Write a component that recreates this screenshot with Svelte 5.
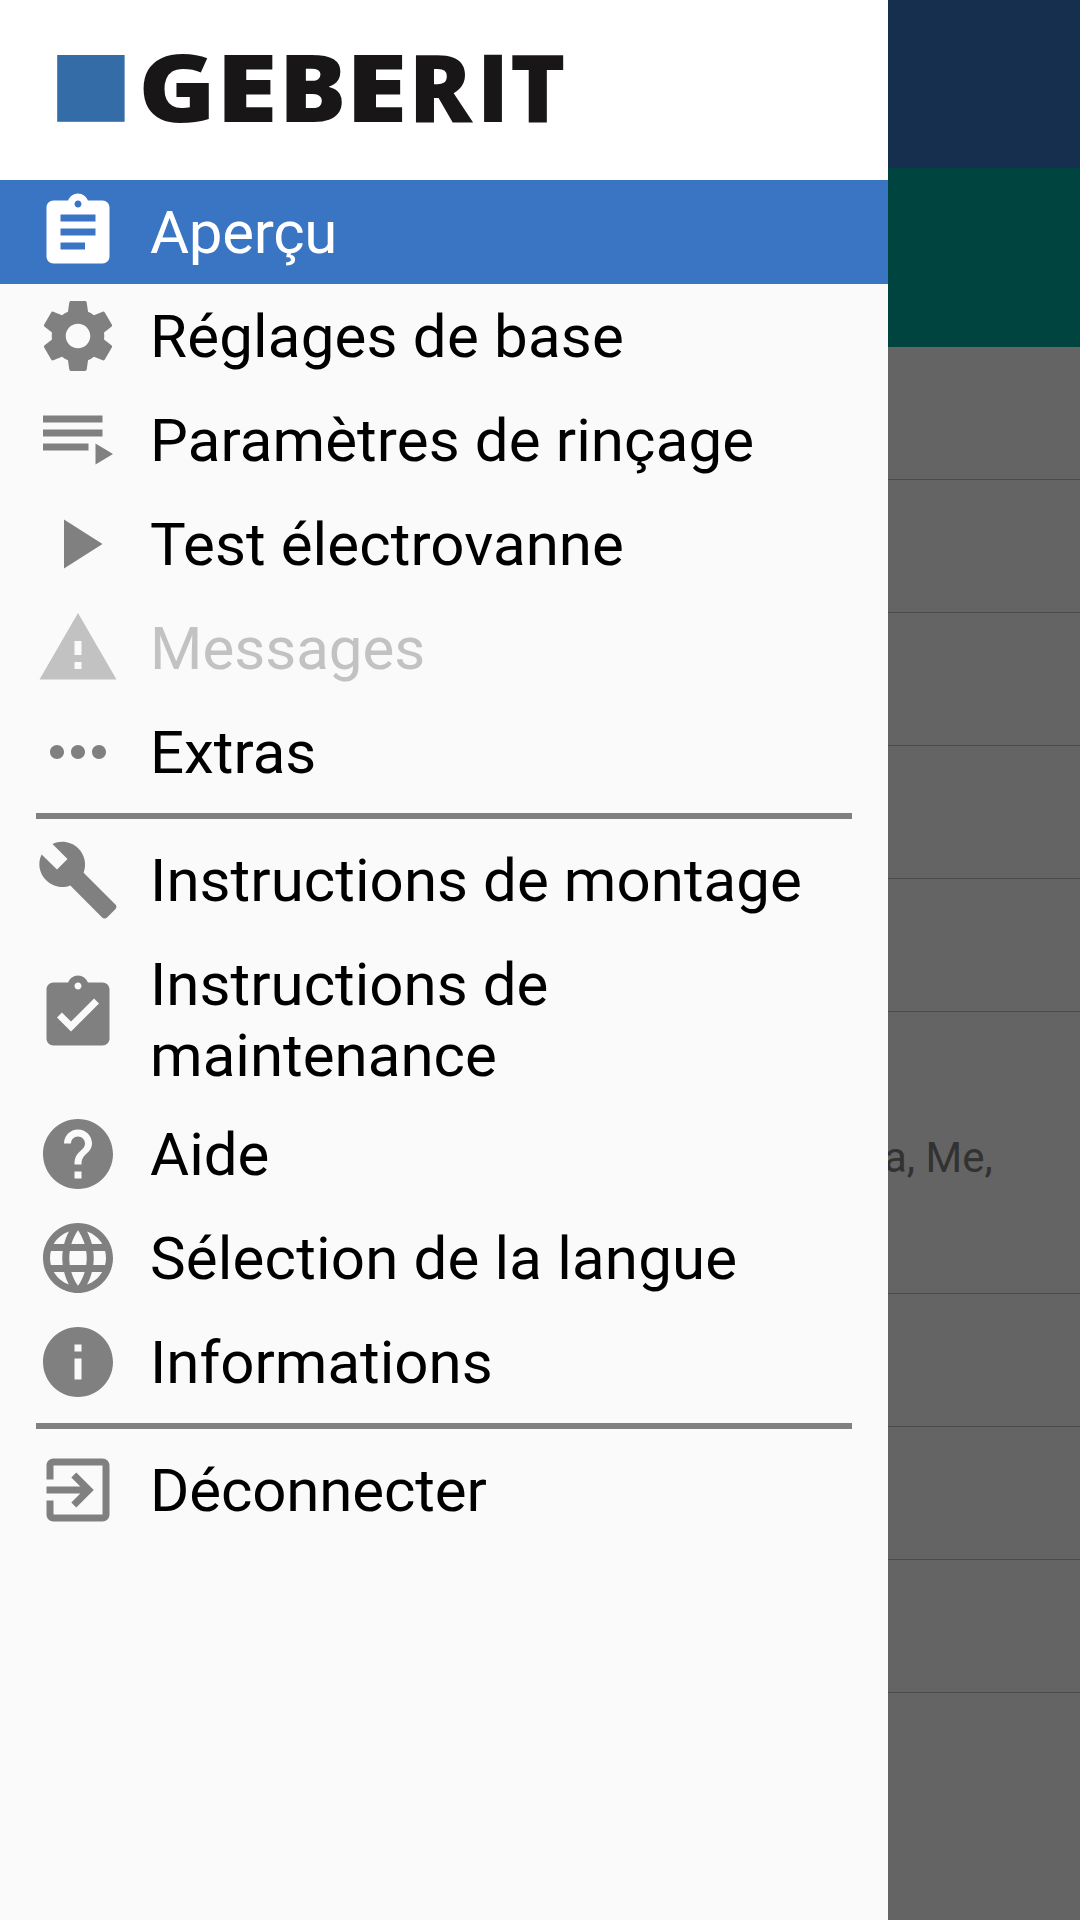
<script>
  const icons = {
    clipboard: 'M19 3h-4.18C14.4 1.84 13.3 1 12 1c-1.3 0-2.4.84-2.82 2H5c-1.1 0-2 .9-2 2v14c0 1.1.9 2 2 2h14c1.1 0 2-.9 2-2V5c0-1.1-.9-2-2-2zm-7 0c.55 0 1 .45 1 1s-.45 1-1 1-1-.45-1-1 .45-1 1-1zm2 14H7v-2h7v2zm3-4H7v-2h10v2zm0-4H7V7h10v2z',
    gear: 'M19.43 12.98c.04-.32.07-.64.07-.98s-.03-.66-.07-.98l2.11-1.65c.19-.15.24-.42.12-.64l-2-3.46c-.12-.22-.39-.3-.61-.22l-2.49 1c-.52-.4-1.08-.73-1.69-.98l-.38-2.65C14.46 2.18 14.25 2 14 2h-4c-.25 0-.46.18-.49.42l-.38 2.65c-.61.25-1.17.59-1.69.98l-2.49-1c-.23-.09-.49 0-.61.22l-2 3.46c-.13.22-.07.49.12.64l2.11 1.65c-.04.32-.07.65-.07.98s.03.66.07.98l-2.11 1.65c-.19.15-.24.42-.12.64l2 3.46c.12.22.39.3.61.22l2.49-1c.52.4 1.08.73 1.69.98l.38 2.65c.03.24.24.42.49.42h4c.25 0 .46-.18.49-.42l.38-2.65c.61-.25 1.17-.59 1.69-.98l2.49 1c.23.09.49 0 .61-.22l2-3.46c.12-.22.07-.49-.12-.64l-2.11-1.65zM12 15.5c-1.93 0-3.5-1.57-3.5-3.5s1.57-3.5 3.5-3.5 3.5 1.57 3.5 3.5-1.57 3.5-3.5 3.5z',
    playlist: 'M2 5h17v2H2zM2 9h17v2H2zM2 13h13v2H2zM17 13v6l5-3z',
    play: 'M8 5v14l11-7z',
    warning: 'M1 21h22L12 2 1 21zm12-3h-2v-2h2v2zm0-4h-2v-4h2v4z',
    dots: 'M6 10c-1.1 0-2 .9-2 2s.9 2 2 2 2-.9 2-2-.9-2-2-2zm12 0c-1.1 0-2 .9-2 2s.9 2 2 2 2-.9 2-2-.9-2-2-2zm-6 0c-1.1 0-2 .9-2 2s.9 2 2 2 2-.9 2-2-.9-2-2-2z',
    wrench: 'M22.7 19l-9.1-9.1c.9-2.3.4-5-1.5-6.9-2-2-5-2.4-7.4-1.3L9 6 6 9 1.6 4.7C.4 7.1.9 10.1 2.9 12.1c1.9 1.9 4.6 2.4 6.9 1.5l9.1 9.1c.4.4 1 .4 1.4 0l2.3-2.3c.5-.4.5-1.1.1-1.4z',
    check: 'M19 3h-4.18C14.4 1.84 13.3 1 12 1c-1.3 0-2.4.84-2.82 2H5c-1.1 0-2 .9-2 2v14c0 1.1.9 2 2 2h14c1.1 0 2-.9 2-2V5c0-1.1-.9-2-2-2zm-7 0c.55 0 1 .45 1 1s-.45 1-1 1-1-.45-1-1 .45-1 1-1zm-2 14l-4-4 1.41-1.41L10 14.17l6.59-6.59L18 9l-8 8z',
    help: 'M12 2C6.48 2 2 6.48 2 12s4.48 10 10 10 10-4.48 10-10S17.52 2 12 2zm1 17h-2v-2h2v2zm2.07-7.75l-.9.92C13.45 12.9 13 13.5 13 15h-2v-.5c0-1.1.45-2.1 1.17-2.83l1.24-1.26c.37-.36.59-.86.59-1.41 0-1.1-.9-2-2-2s-2 .9-2 2H8c0-2.21 1.79-4 4-4s4 1.79 4 4c0 .88-.36 1.68-.93 2.25z',
    globe: 'M11.99 2C6.47 2 2 6.48 2 12s4.47 10 9.99 10C17.52 22 22 17.52 22 12S17.52 2 11.99 2zm6.93 6h-2.95c-.32-1.25-.78-2.45-1.38-3.56 1.84.63 3.37 1.91 4.33 3.56zM12 4.04c.83 1.2 1.48 2.53 1.91 3.96h-3.82c.43-1.43 1.08-2.76 1.91-3.96zM4.26 14C4.1 13.36 4 12.69 4 12s.1-1.36.26-2h3.38c-.08.66-.14 1.32-.14 2 0 .68.06 1.34.14 2H4.26zm.82 2h2.95c.32 1.25.78 2.45 1.38 3.56-1.84-.63-3.37-1.9-4.33-3.56zm2.95-8H5.08c.96-1.66 2.49-2.93 4.33-3.56C8.81 5.55 8.35 6.75 8.03 8zM12 19.96c-.83-1.2-1.48-2.53-1.91-3.96h3.82c-.43 1.43-1.08 2.76-1.91 3.96zM14.34 14H9.66c-.09-.66-.16-1.32-.16-2 0-.68.07-1.35.16-2h4.68c.09.65.16 1.32.16 2 0 .68-.07 1.34-.16 2zm.25 5.56c.6-1.11 1.06-2.31 1.38-3.56h2.95c-.96 1.65-2.49 2.93-4.33 3.56zM16.36 14c.08-.66.14-1.32.14-2 0-.68-.06-1.34-.14-2h3.38c.16.64.26 1.31.26 2s-.1 1.36-.26 2h-3.38z',
    info: 'M12 2C6.48 2 2 6.48 2 12s4.48 10 10 10 10-4.48 10-10S17.52 2 12 2zm1 15h-2v-6h2v6zm0-8h-2V7h2v2z',
    exit: 'M10.09 15.59L11.5 17l5-5-5-5-1.41 1.41L12.67 11H3v2h9.67l-2.58 2.59zM19 3H5c-1.11 0-2 .9-2 2v4h2V5h14v14H5v-4H3v4c0 1.1.89 2 2 2h14c1.1 0 2-.9 2-2V5c0-1.1-.9-2-2-2z'
  };

  // Wordmark letters: baseline x and horizontal stretch
  const wordmark = [
    ['G', 138.2, 1.05],
    ['E', 215.7, 1.13],
    ['B', 278.8, 1.005],
    ['E', 345.5, 1.13],
    ['R', 408.7, 0.935],
    ['I', 477.1, 0.92],
    ['T', 510.1, 0.94]
  ];

  // `track` is the letter spacing in pixels
  const groups = [
    [
      { label: 'Aperçu', icon: 'clipboard', active: true, track: -0.3 },
      { label: 'Réglages de base', icon: 'gear', track: 0.2 },
      { label: 'Paramètres de rinçage', icon: 'playlist', track: 0.12 },
      { label: 'Test électrovanne', icon: 'play', track: 0.1 },
      { label: 'Messages', icon: 'warning', disabled: true, track: 0 },
      { label: 'Extras', icon: 'dots', track: 0 }
    ],
    [
      { label: 'Instructions de montage', icon: 'wrench', track: 0.06 },
      { label: 'Instructions de maintenance', icon: 'check', tall: true, track: 0.03 },
      { label: 'Aide', icon: 'help', track: 0 },
      { label: 'Sélection de la langue', icon: 'globe', track: 0.18 },
      { label: 'Informations', icon: 'info', track: 0 }
    ],
    [{ label: 'Déconnecter', icon: 'exit', track: -0.12 }]
  ];

  const listRows = ['', '', '', '', '', 'a, Me,', '', '', '', ''];
</script>

<div class="screen">
  <nav class="drawer">
    <header>
      <svg class="logo" viewBox="0 0 600 180" role="img" aria-label="Geberit">
        <rect x="57.2" y="55" width="67.4" height="66.8" fill="#346ca7" />
        {#each wordmark as [letter, x, stretch]}
          <text transform="translate({x} 121.8) scale({stretch} 0.936)">{letter}</text>
        {/each}
      </svg>
    </header>
    {#each groups as group, i}
      {#if i > 0}<hr />{/if}
      <ul>
        {#each group as item}
          <li class:active={item.active} class:disabled={item.disabled} class:tall={item.tall}>
            <svg class="icon" viewBox="0 0 24 24" aria-hidden="true"><path d={icons[item.icon]} /></svg>
            <span style:letter-spacing="{item.track}px">{item.label}</span>
          </li>
        {/each}
      </ul>
    {/each}
  </nav>
  <main>
    <div class="appbar"></div>
    <div class="banner"></div>
    {#each listRows as row}
      <div class="row" class:detail={row}>{row}</div>
    {/each}
  </main>
</div>

<style>
  :global(body) { margin: 0; }
  .screen {
    display: flex;
    width: 1080px;
    height: 1920px;
    overflow: hidden;
    background: #646464;
    font-family: Roboto, "Liberation Sans", sans-serif;
  }
  .drawer {
    flex: 0 0 888px;
    background: #fafafa;
    color: #000;
  }
  header { height: 180px; background: #fff; }
  .logo { display: block; width: 600px; height: 180px; }
  .logo text {
    font-family: "Open Sans", sans-serif;
    font-weight: 800;
    font-size: 100px;
    fill: #181617;
  }
  ul { list-style: none; margin: 0; padding: 0; }
  li {
    box-sizing: border-box;
    display: flex;
    align-items: center;
    height: 104px;
    padding: 1px 36px 0;
    font-size: 60px;
    line-height: 71px;
  }
  .icon {
    flex: none;
    width: 84px;
    height: 84px;
    margin: 0 30px 1px 0;
    fill: #808080;
  }
  .active { background: #3a75c4; color: #fff; }
  .active .icon { fill: #fff; }
  .disabled { color: #c2c2c2; }
  .disabled .icon { fill: #c2c2c2; }
  .tall { height: 170px; padding: 0 36px 6px; }
  .tall .icon { margin-bottom: 0; }
  .tall span { padding-top: 12px; }
  hr {
    height: 6px;
    margin: 9px 36px;
    border: 0;
    background: #808080;
  }
  main { flex: 1; min-width: 0; overflow: hidden; color: #323232; }
  .appbar { height: 168px; background: #172f4f; }
  .banner { height: 179px; background: #00443f; }
  .row {
    box-sizing: border-box;
    height: 133px;
    border-bottom: 1px solid #4b4b4b;
  }
  .row:last-child { border: 0; }
  .detail {
    height: 282px;
    font-size: 42px;
    line-height: 50px;
    padding-top: 121px;
    text-indent: -4px;
    white-space: nowrap;
  }
</style>
